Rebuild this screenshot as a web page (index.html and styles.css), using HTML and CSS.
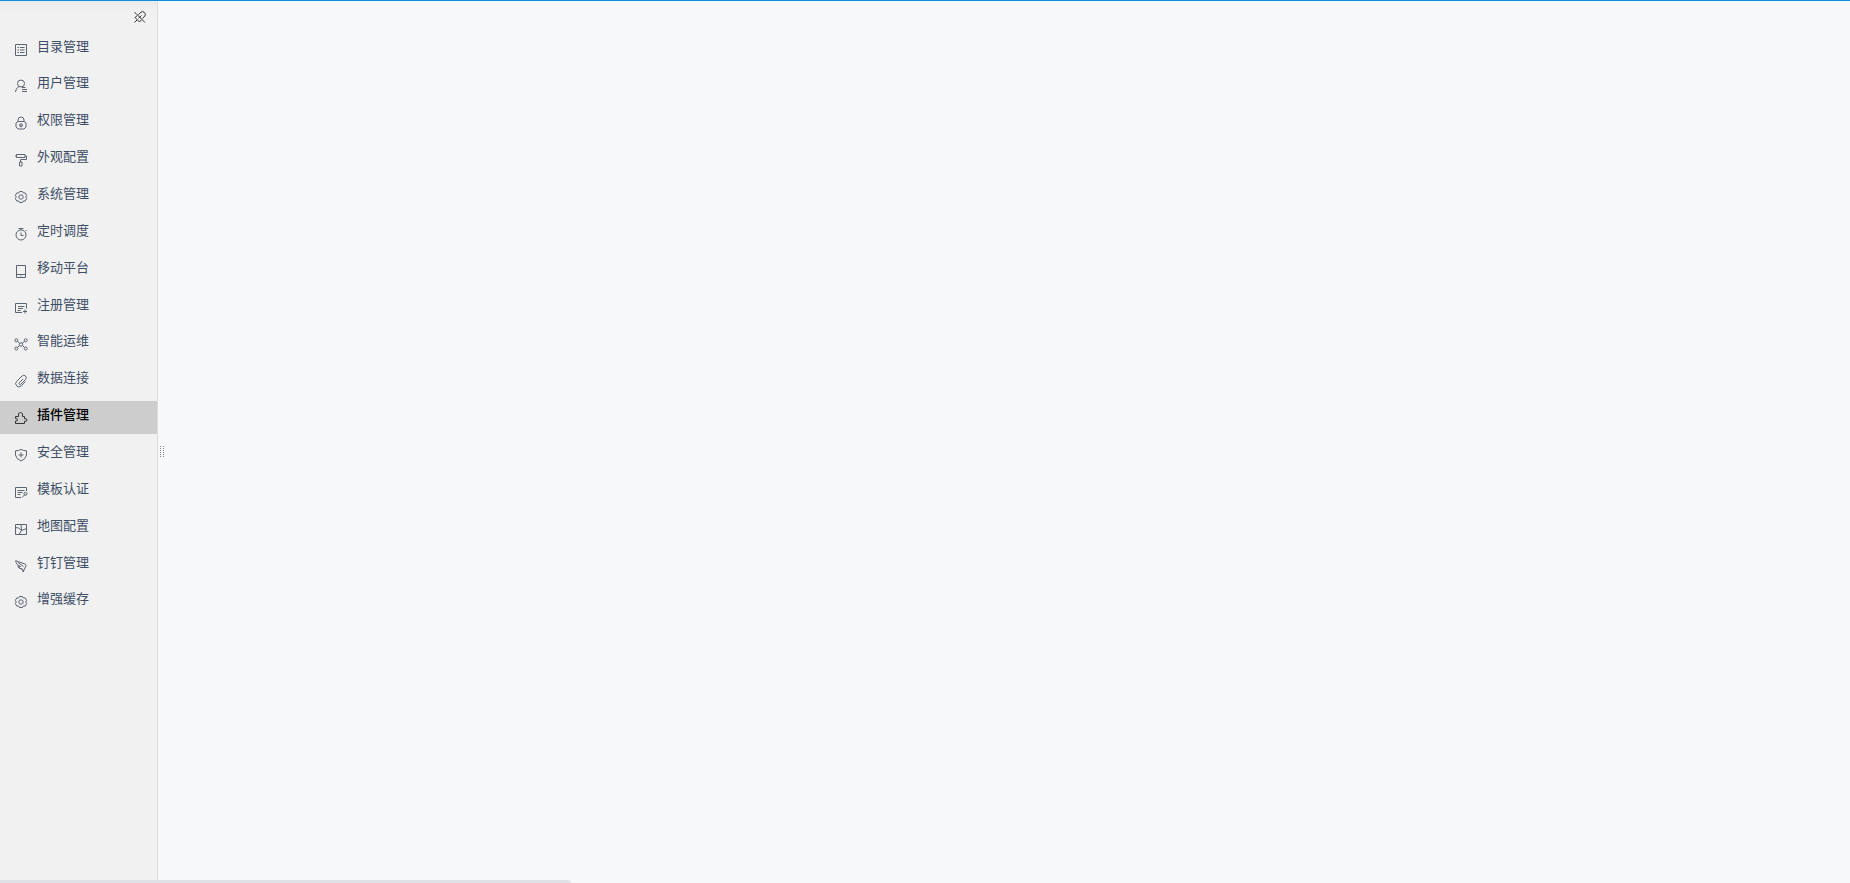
FILE: index.html
```html
<!DOCTYPE html>
<html lang="zh-CN">
<head>
    <meta charset="UTF-8">
    <meta name="viewport" content="width=device-width, initial-scale=1.0">
    <title>管理系统</title>
    <link rel="stylesheet" href="styles.css">
</head>
<body>
    <!-- Sidebar -->
    <aside class="sidebar">
        <div class="sidebar-top">
            <button class="pin" type="button" aria-label="固定">
                <svg class="icon" viewBox="0 0 12 12"><path d="M4.500 3.500 7 1.200Q8.500 0 10 1.200L10.800 2Q12 3.500 10.800 5L8.500 7.500M3.300 4.500 1 6.500M7.500 8.700 5.500 11M1 6.500 5.500 11M2 2.500 9.500 10M3 9 .5 11.500M.5 1.500 2 2.500M9.500 10 11 11.500M4.500 7.500l3-3"/></svg>
            </button>
        </div>
        <nav class="menu">
            <a class="item" href="#">
                <svg class="icon" viewBox="0 0 12 12"><path d="M.5.5h11v11H.5zM2.500 3.500h1.500M5 3.500h4.500M2.500 6h1.500M5 6h4.500M2.500 8.500h1.500M5 8.500h4.500"/></svg>
                <span>目录管理</span>
            </a>
            <a class="item" href="#">
                <svg class="icon" viewBox="0 0 12 12"><circle cx="6" cy="3.500" r="3.500"/><path d="M4 6.500Q.8 8 .4 12M7 7.500h3.500M7 9.500h5M7 11.500h5"/></svg>
                <span>用户管理</span>
            </a>
            <a class="item" href="#">
                <svg class="icon" viewBox="0 0 12 12"><path d="M3 4.500V3a3 3 0 0 1 6 0v1.500M3 4.500h6L11 6v4L9 12H3L1 10V6z"/><circle cx="6" cy="8.300" r="1.500"/><path d="M6 7.500v1.500"/></svg>
                <span>权限管理</span>
            </a>
            <a class="item" href="#">
                <svg class="icon" viewBox="0 0 12 12"><path d="M1.500.5h8.500v3H1.500zM0 2h1.500M10 2h1.500v3.500h-6v2.500M4.500 8h2.500v4h-2.500z"/></svg>
                <span>外观配置</span>
            </a>
            <a class="item" href="#">
                <svg class="icon" viewBox="0 0 12 12"><path d="M4.500.5h3L8.300 2l1.900-.1 1.500 2.500L10.700 6l1 1.600-1.500 2.500-1.900-.1-.8 1.500h-3L3.700 10l-1.900.1L.3 7.600 1.300 6l-1-1.600 1.500-2.500 1.900.1z"/><circle cx="6" cy="6" r="2.200"/></svg>
                <span>系统管理</span>
            </a>
            <a class="item" href="#">
                <svg class="icon" viewBox="0 0 12 12"><circle cx="6" cy="7" r="5"/><path d="M3.500.5h5M6 .5V2M6 4.500v3h2.500M10.500 2l1 1"/></svg>
                <span>定时调度</span>
            </a>
            <a class="item" href="#">
                <svg class="icon" viewBox="0 0 12 12"><path d="M1.500.5h9v12h-9zM1.500 9.500h9M5.500 11h1"/></svg>
                <span>移动平台</span>
            </a>
            <a class="item" href="#">
                <svg class="icon" viewBox="0 0 12 12"><path d="M7 10.500H.5v-9h11v5M3 4.500h6.500M3 6.500h5M2.500 8.500h3M10 7.500v4M8 9.500h4"/></svg>
                <span>注册管理</span>
            </a>
            <a class="item" href="#">
                <svg class="icon" viewBox="0 0 12 12"><circle cx="6" cy="6.500" r="1.700"/><circle cx="1.300" cy="2.300" r="1.500"/><circle cx="10.700" cy="2.300" r="1.500"/><circle cx="1.300" cy="10.500" r="1.500"/><circle cx="10.700" cy="10.500" r="1.500"/><path d="m2.400 3.300 2.300 2M9.600 3.300l-2.300 2M2.400 9.500l2.300-2M9.600 9.500l-2.300-2"/></svg>
                <span>智能运维</span>
            </a>
            <a class="item" href="#">
                <svg class="icon" viewBox="0 0 12 12"><path d="M8 4 4.300 7.700a1 1 0 0 0 1.500 1.500L10.500 4.500a2.400 2.400 0 0 0-3.500-3.500L1.700 6.300a3.200 3.200 0 0 0 4.600 4.600L10.500 6.500"/></svg>
                <span>数据连接</span>
            </a>
            <a class="item active" href="#" aria-current="page">
                <svg class="icon" viewBox="0 0 12 12"><path d="M.5 11.500V9Q2.500 9.500 2.500 7.800T.5 6.500v-2h3Q2.600.5 5.500.5T7.500 4.500h2v2.200Q12 6.300 12 8T9.500 9.200v2.300z"/></svg>
                <span>插件管理</span>
            </a>
            <a class="item" href="#">
                <svg class="icon" viewBox="0 0 12 12"><path d="M6 .4Q8 1.800 11.500 1.800V6Q11 10 6 12 1 10 .5 6V1.800Q4 1.800 6 .4zM6 3.500v5M3.500 6h5"/></svg>
                <span>安全管理</span>
            </a>
            <a class="item" href="#">
                <svg class="icon" viewBox="0 0 12 12"><path d="M6 11.500H.5v-10h11V5M2.500 4.500h7M2.500 6.500h5M2.500 8.500h3M7 11.500l3-3"/><circle cx="10.500" cy="7.800" r="1.500"/></svg>
                <span>模板认证</span>
            </a>
            <a class="item" href="#">
                <svg class="icon" viewBox="0 0 12 12"><path d="M.5 1.500h11v10H.5zM.5 4.500l3 .5 3 2.500 5-2M6 1.500l.5 6M4 11.500l2.500-4"/></svg>
                <span>地图配置</span>
            </a>
            <a class="item" href="#">
                <svg class="icon" viewBox="0 0 12 12"><path d="M.7.7 10.500 4.200Q11.500 5 10.500 7L8 12 7.700 9.300Q3.500 8.500 2.700 6L5.500 6.500Q1 5 .7.7zM3 2.500l5.500 4M3.500 7.500l4 2"/></svg>
                <span>钉钉管理</span>
            </a>
            <a class="item" href="#">
                <svg class="icon" viewBox="0 0 12 12"><path d="M4.500.5h3L8.300 2l1.900-.1 1.500 2.500L10.700 6l1 1.600-1.500 2.500-1.900-.1-.8 1.500h-3L3.700 10l-1.900.1L.3 7.600 1.300 6l-1-1.600 1.500-2.500 1.900.1z"/><circle cx="6" cy="6" r="2.200"/></svg>
                <span>增强缓存</span>
            </a>
        </nav>
    </aside>

    <!-- Drag handle -->
    <div class="splitter"><span class="grip"></span></div>

    <!-- Content -->
    <main class="content"></main>

    <!-- Status strip over the bottom edge -->
    <div class="status"></div>
</body>
</html>
```
FILE: styles.css
```css
* {
    box-sizing: border-box;
}

body {
    margin: 0;
    display: flex;
    min-height: 100vh;
    border-top: 1px solid #0a8ddb;
    background: #f7f8fa;
    font-family: "Noto Sans CJK SC", "Noto Sans", sans-serif;
    font-size: 13px;
}

/* Sidebar */
.sidebar {
    flex: none;
    width: 158px;
    background: linear-gradient(#ebebeb, #f1f1f1 10px);
    border-right: 1px solid #dcdcdc;
}

.sidebar-top {
    display: flex;
    justify-content: flex-end;
    height: 31px;
    padding: 10px 11px 0 0;
}

.pin {
    width: 12px;
    height: 12px;
    padding: 0;
    border: none;
    background: none;
    color: #333;
    cursor: pointer;
}

.icon {
    display: block;
    flex: none;
    width: 12px;
    height: 12px;
    overflow: visible;
    fill: none;
    stroke: currentColor;
    stroke-width: 1;
}

/* Menu */
.menu {
    display: flex;
    flex-direction: column;
    justify-content: space-between;
    min-height: 586px;
}

.item {
    display: flex;
    align-items: center;
    gap: 10px;
    height: 33px;
    padding: 0 0 6px 15px;
    color: #3d4d66;
    line-height: 20px;
    text-decoration: none;
}

.item .icon {
    margin-top: 8px;
    color: #5c6470;
}

.item.active {
    background: #cdcdcd;
    color: #000;
    font-weight: 500;
}

.item.active .icon {
    color: #333;
}

/* Splitter */
.splitter {
    display: flex;
    align-items: center;
    width: 10px;
    padding: 18px 0 0 2px;
    cursor: col-resize;
}

.grip {
    width: 4px;
    height: 12px;
    background: repeating-linear-gradient(#f7f8fa 0 1px, transparent 1px 2px),
        linear-gradient(90deg, #888 1px, transparent 1px 3px, #888 3px);
}

.content {
    flex: 1;
}

/* Status strip */
.status {
    position: fixed;
    left: 0;
    bottom: 0;
    width: 571px;
    height: 3px;
    border-top-right-radius: 3px;
    background: #dfe1e5;
}
```
